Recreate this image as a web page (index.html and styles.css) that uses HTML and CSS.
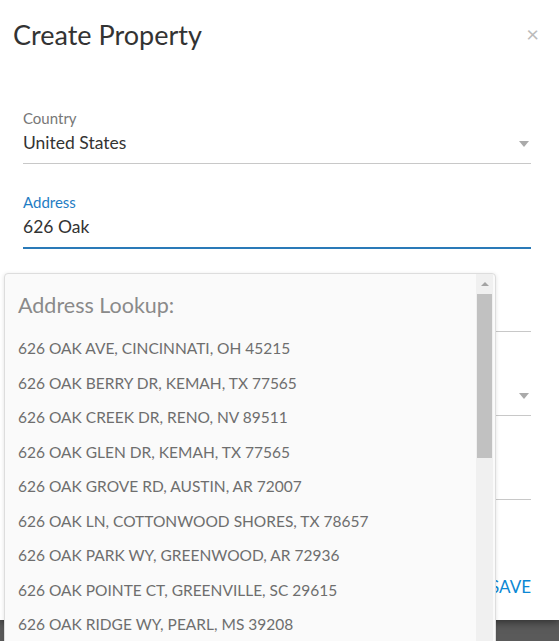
FILE: index.html
```html
<!DOCTYPE html>
<html lang="en">
<head>
  <meta charset="UTF-8" />
  <meta name="viewport" content="width=device-width, initial-scale=1.0" />
  <title>Create Property</title>
  <link rel="stylesheet" href="styles.css">
</head>
<body>
  <div class="modal">
    <div class="modal-header">
      <div class="modal-title">Create Property</div>
      <span class="close">&times;</span>
    </div>

    <div class="modal-body">
      <div class="field">
        <label>Country</label>
        <div class="value">United States <span class="caret"></span></div>
      </div>

      <div class="field active">
        <label>Address</label>
        <div class="value">626 Oak</div>
      </div>

      <!-- these sit under the lookup list -->
      <div class="field">
        <label></label>
        <div class="value"></div>
      </div>

      <div class="field">
        <label></label>
        <div class="value"><span class="caret"></span></div>
      </div>

      <div class="field">
        <label></label>
        <div class="value"></div>
      </div>
    </div>

    <div class="modal-footer">
      <button class="btn-save">SAVE</button>
    </div>

    <div class="lookup">
      <div class="lookup-list">
        <div class="lookup-title">Address Lookup:</div>
        <div class="lookup-item">626 OAK AVE, CINCINNATI, OH 45215</div>
        <div class="lookup-item">626 OAK BERRY DR, KEMAH, TX 77565</div>
        <div class="lookup-item">626 OAK CREEK DR, RENO, NV 89511</div>
        <div class="lookup-item">626 OAK GLEN DR, KEMAH, TX 77565</div>
        <div class="lookup-item">626 OAK GROVE RD, AUSTIN, AR 72007</div>
        <div class="lookup-item">626 OAK LN, COTTONWOOD SHORES, TX 78657</div>
        <div class="lookup-item">626 OAK PARK WY, GREENWOOD, AR 72936</div>
        <div class="lookup-item">626 OAK POINTE CT, GREENVILLE, SC 29615</div>
        <div class="lookup-item">626 OAK RIDGE WY, PEARL, MS 39208</div>
      </div>
      <div class="scrollbar">
        <div class="scroll-btn"><span class="tri-up"></span></div>
        <div class="scroll-thumb"></div>
        <div class="scroll-track"></div>
        <div class="scroll-btn"><span class="tri-down"></span></div>
      </div>
    </div>
  </div>
</body>
</html>
```

FILE: styles.css
```css
body {
  margin: 0;
  height: 641px;
  overflow: hidden;
  background: #5a5a5a;
  font-family: 'Lato', 'Liberation Sans', sans-serif;
}
.modal {
  position: relative;
  height: 620px;
  background: #fff;
  box-shadow: 0 2px 8px rgba(0, 0, 0, 0.5);
}
.modal-header {
  display: flex;
  justify-content: space-between;
  align-items: center;
  padding: 18px 20px 0 13px;
}
.modal-title {
  font-size: 27px;
  line-height: 34px;
  color: #333;
}
.close {
  font-size: 22px;
  line-height: 34px;
  color: #bbb;
  margin-top: -2px;
}
.modal-body {
  padding: 56px 28px 0 23px;
}
.field {
  margin-bottom: 28px;
  border-bottom: 1px solid #c8c8c8;
}
.field label {
  display: block;
  height: 20px;
  font-size: 15px;
  line-height: 20px;
  color: #777;
}
.field .value {
  position: relative;
  font-size: 17.5px;
  line-height: 30px;
  height: 30px;
  padding-bottom: 5px;
  color: #333;
}
.field.active {
  border-bottom-color: #2a7ab8;
  box-shadow: 0 1px 0 #2a7ab8;
}
.field.active label {
  color: #1f7dc4;
}
.caret {
  position: absolute;
  right: 2px;
  top: 13px;
  border-left: 5px solid transparent;
  border-right: 5px solid transparent;
  border-top: 6px solid #aaa;
}
.modal-footer {
  display: flex;
  justify-content: flex-end;
  padding: 49px 28px 0 0;
}
.btn-save {
  border: none;
  background: none;
  padding: 0;
  font-family: inherit;
  font-size: 17px;
  line-height: 20px;
  color: #0b87d4;
}
.lookup {
  position: absolute;
  top: 273px;
  left: 4px;
  width: 490px;
  height: 380px;
  display: flex;
  background: #fafafa;
  border: 1px solid #ddd;
  border-radius: 4px;
  box-shadow: 0 1px 4px rgba(0, 0, 0, 0.12);
  overflow: hidden;
}
.lookup-list {
  flex: 1;
  padding: 19px 0 0 13px;
}
.lookup-title {
  font-size: 21.5px;
  line-height: 24px;
  color: #8a8a8a;
  margin-bottom: 14px;
}
.lookup-item {
  font-size: 15.5px;
  line-height: 34.5px;
  color: #6e6e6e;
  white-space: nowrap;
}
.scrollbar {
  width: 17px;
  margin-right: 2px;
  display: flex;
  flex-direction: column;
  background: #f0f0f0;
}
.scroll-btn {
  height: 20px;
  display: flex;
  align-items: center;
  justify-content: center;
}
.tri-up {
  border-left: 4px solid transparent;
  border-right: 4px solid transparent;
  border-bottom: 4px solid #a3a3a3;
}
.tri-down {
  border-left: 4px solid transparent;
  border-right: 4px solid transparent;
  border-top: 4px solid #505050;
}
.scroll-thumb {
  height: 164px;
  margin: 0 1px;
  background: #c1c1c1;
}
.scroll-track {
  flex: 1;
}
```
